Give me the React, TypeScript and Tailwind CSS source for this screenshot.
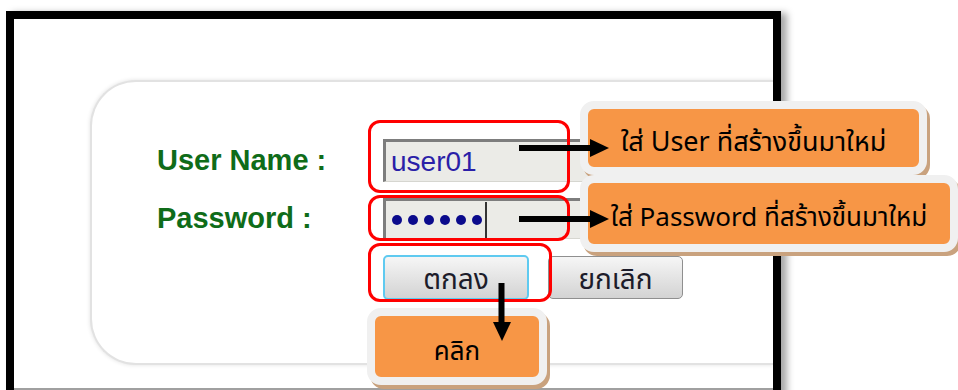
import React from 'react';

const thai = "font-['Noto_Sans','Noto_Sans_Thai','Loma','Garuda',sans-serif]";

function Callout({ className, text }: { className: string; text: React.ReactNode }) {
  return (
    <div
      className={`absolute rounded-[14px] border-[8px] border-[#f0f0f0] bg-[#f79646] shadow-[3px_4px_0_#c9a27e] flex items-center justify-center text-black ${thai} ${className}`}
    >
      {text}
    </div>
  );
}

function Arrow({ className, vertical }: { className: string; vertical?: boolean }) {
  if (vertical) {
    return (
      <svg className={`absolute ${className}`} width="20" height="58" viewBox="0 0 20 58">
        <rect x="6.5" y="0" width="6" height="42" fill="#000" />
        <polygon points="1,39 19,39 10,58" fill="#000" />
      </svg>
    );
  }
  return (
    <svg className={`absolute ${className}`} width="90" height="20" viewBox="0 0 90 20">
      <rect x="0" y="7" width="74" height="6" fill="#000" />
      <polygon points="71,1 71,19 90,10" fill="#000" />
    </svg>
  );
}

export default function App() {
  return (
    <div className="relative w-[958px] h-[390px] overflow-hidden bg-white">
      {/* window frame */}
      <div className="ml-[6px] mt-[11px] w-[775px] h-[390px] border-[8px] border-b-0 border-black bg-white shadow-[6px_2px_7px_rgba(0,0,0,0.35)] flex flex-col">
        <div className="ml-[76px] mt-[61px] h-[285px] rounded-l-[46px] border-2 border-r-0 border-[#e2e2e2] shadow-[0_0_4px_rgba(0,0,0,0.12)] bg-white">
          <div className="grid grid-cols-[226px_auto] items-center gap-y-[16px] pl-[65px] pt-[57px] font-['Liberation_Sans',Arial,sans-serif]">
            <div className="text-[29px] font-bold text-[#0f6c19] leading-none">User Name :</div>
            <div className="h-[43px] w-[225px] bg-[#ebebe7] border-t-[3px] border-l-[3px] border-[#7d7d7d] border-r border-b border-r-[#d6d6d0] border-b-[#d6d6d0] flex items-center pl-[5px] text-[28px] text-[#2a1fa8] leading-none">
              user01
            </div>
            <div className="text-[29px] font-bold text-[#0f6c19] leading-none">Password :</div>
            <div className="h-[41px] w-[225px] bg-[#ebebe7] border-t-[3px] border-l-[3px] border-[#7d7d7d] border-r border-b border-r-[#d6d6d0] border-b-[#d6d6d0] flex items-center pl-[6px]">
              <div className="flex gap-[6px]">
                {[0, 1, 2, 3, 4, 5].map((i) => (
                  <span key={i} className="w-[10px] h-[10px] rounded-full bg-[#0a0a8c]" />
                ))}
              </div>
              <span className="ml-[3px] w-[2px] h-[36px] bg-[#333]" />
            </div>
            <div />
            <div className="flex gap-[19px] items-center">
              <button className={`w-[146px] h-[45px] rounded-[5px] border-2 border-[#5fcaf0] bg-gradient-to-b from-[#f6f6f6] to-[#d3d3d3] text-[28px] leading-none text-[#1c1c2a] ${thai}`}>
                ตกลง
              </button>
              <button className={`w-[135px] h-[43px] rounded-[5px] border border-[#8f8f8f] bg-gradient-to-b from-[#f6f6f6] to-[#d3d3d3] text-[28px] leading-none text-[#1c1c2a] ${thai}`}>
                ยกเลิก
              </button>
            </div>
          </div>
        </div>
        <div className="mt-[23px] h-[2px] bg-[#a0a0a0]" />
      </div>

      {/* red highlight boxes */}
      <div className="absolute left-[368px] top-[120px] w-[202px] h-[73px] rounded-[12px] border-[3px] border-[#ff0000]" />
      <div className="absolute left-[368px] top-[195px] w-[202px] h-[46px] rounded-[12px] border-[3px] border-[#ff0000]" />
      <div className="absolute left-[368px] top-[243px] w-[184px] h-[59px] rounded-[12px] border-[3px] border-[#ff0000]" />

      {/* callouts */}
      <Callout
        className="left-[580px] top-[101px] w-[347px] h-[74px] pt-[6px] text-[27px]"
        text={<span>ใส่ User ที่สร้างขึ้นมาใหม่</span>}
      />
      <Callout
        className="left-[580px] top-[175px] w-[378px] h-[77px] pt-[6px] text-[26px]"
        text={<span>ใส่ Password ที่สร้างขึ้นมาใหม่</span>}
      />
      <Callout
        className="left-[367px] top-[308px] w-[180px] h-[77px] pt-[8px] text-[26px]"
        text={<span>คลิก</span>}
      />

      {/* arrows */}
      <Arrow className="left-[519px] top-[138px]" />
      <Arrow className="left-[519px] top-[209px]" />
      <Arrow vertical className="left-[492px] top-[283px]" />
    </div>
  );
}
